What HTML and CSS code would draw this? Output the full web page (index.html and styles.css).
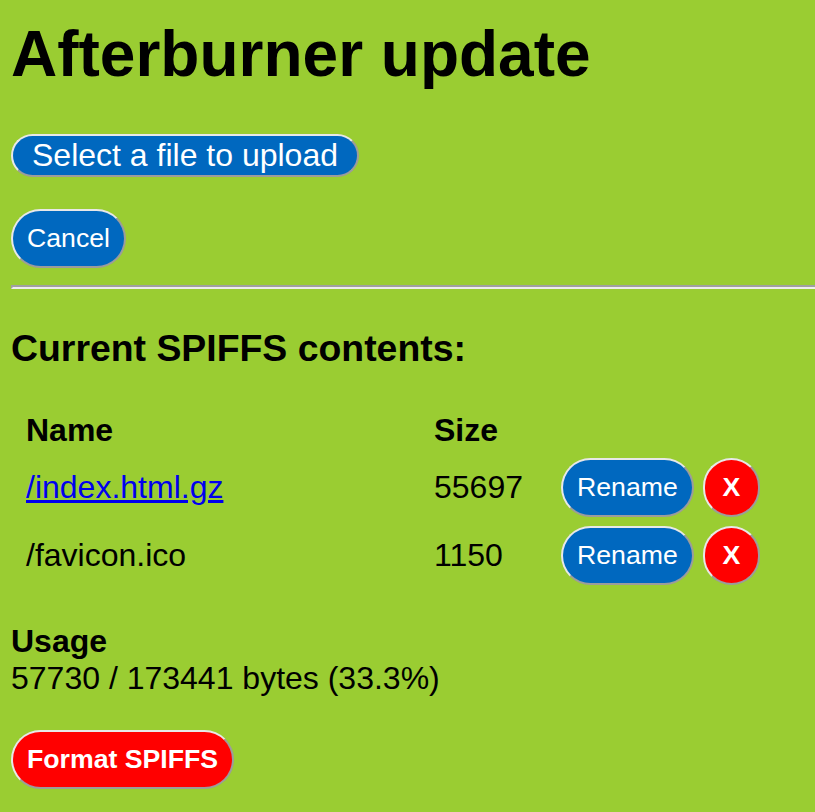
FILE: index.html
```html
<!DOCTYPE html>
<html lang="en">

<head>
    <meta charset="utf-8" />
    <title>Afterburner update</title>
    <link rel="stylesheet" href="styles.css">
</head>

<body>
  <h1>Afterburner update</h1>

  <div class="row first">
    <label class="pick" for="upload">Select a file to upload</label>
    <input type="file" id="upload" class="hidden">
  </div>

  <div class="row">
    <button class="pill">Cancel</button>
  </div>

  <hr>

  <h3>Current SPIFFS contents:</h3>

  <table class="files">
    <tr>
      <th class="name">Name</th>
      <th class="size">Size</th>
      <th></th>
    </tr>
    <tr>
      <td class="name"><a href="/index.html.gz">/index.html.gz</a></td>
      <td class="size">55697</td>
      <td><div class="ops"><button class="pill">Rename</button><button class="pill red bold">X</button></div></td>
    </tr>
    <tr>
      <td class="name">/favicon.ico</td>
      <td class="size">1150</td>
      <td><div class="ops"><button class="pill">Rename</button><button class="pill red bold">X</button></div></td>
    </tr>
  </table>

  <p class="usage"><b>Usage</b><br>57730 / 173441 bytes (33.3%)</p>

  <div class="row format">
    <button class="pill red bold">Format SPIFFS</button>
  </div>
</body>

</html>
```

FILE: styles.css
```css
/*
  colours:
    page     yellowgreen
    button   #0068bf
    danger   #ff0000
 */
body {
  margin: 0 0 0 11px;
  background-color: yellowgreen;
  color: #000;
  font-family: "Liberation Sans", Arial, sans-serif;
  font-size: 32px;
}

h1 {
  font-size: 64px;
  margin: 17px 0 0 0;
}

h3 {
  font-size: 37.4px;
  margin: 38px 0 0 0;
}

.row {
  display: flex;
  margin-top: 32px;
}

.row.first {
  margin-top: 43px;
}

.hidden {
  display: none;
}

.pick {
  background-color: #0068bf;
  color: #fff;
  font-size: 32px;
  padding: 1px 19px;
  border: 2px solid;
  border-color: #e8e8e8 #9c9c9c #9c9c9c #e8e8e8;
  border-radius: 22px;
}

button.pill {
  background-color: #0068bf;
  color: #fff;
  font-family: "Liberation Sans", Arial, sans-serif;
  font-size: 26.67px;
  padding: 12px 14px;
  border: 2px solid;
  border-color: #e8e8e8 #9c9c9c #9c9c9c #e8e8e8;
  border-radius: 30px;
}

button.red {
  background-color: #ff0000;
}

button.bold {
  font-weight: bold;
}

hr {
  margin: 17px 0 0 0;
  height: 0;
  border: 0;
  border-top: 2px solid #a0a0a0;
  border-left: 2px solid #a0a0a0;
  border-bottom: 2px solid #eeeeee;
}

table.files {
  margin-top: 35px;
  border-spacing: 5px;
}

table.files th,
table.files td {
  text-align: left;
  padding: 2px 10px;
  vertical-align: middle;
}

th.name {
  width: 383px;
}

th.size {
  width: 102px;
}

.ops {
  display: flex;
  gap: 9px;
}

.ops .red {
  width: 57px;
  padding: 12px 0;
}

a {
  color: #0000ee;
}

p.usage {
  margin: 31px 0 0 0;
}

.row.format {
  margin-top: 33px;
}
```
